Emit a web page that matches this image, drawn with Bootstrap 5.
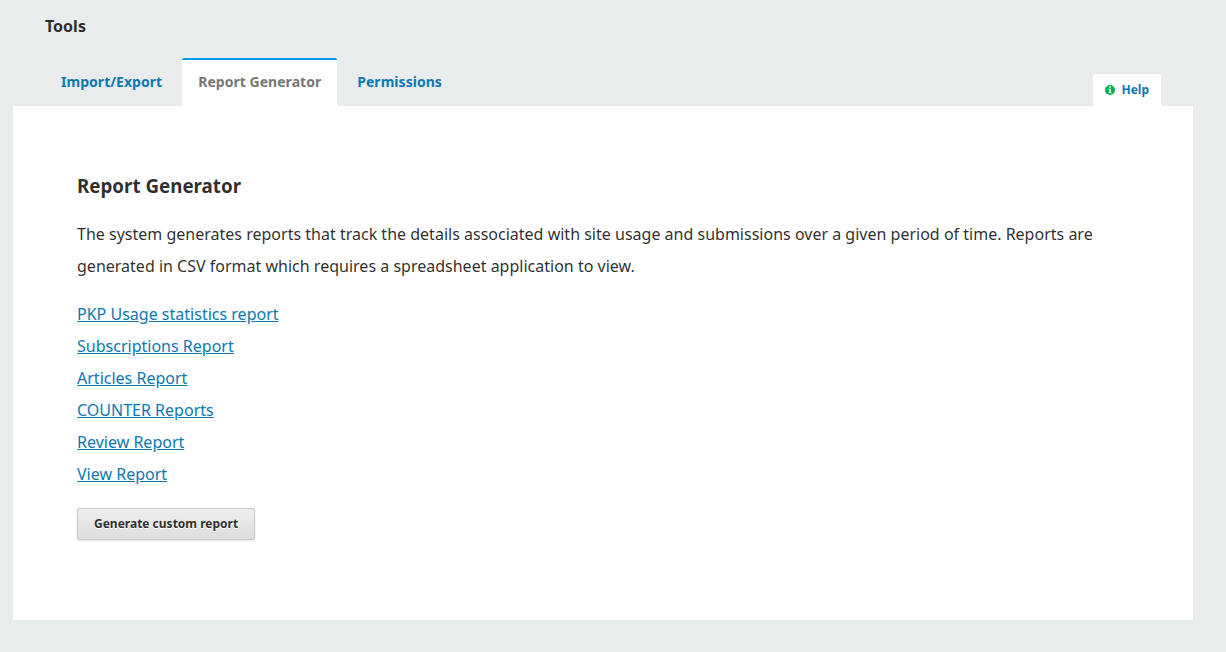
<!DOCTYPE html>
<html lang="en">
<head>
<meta charset="utf-8">
<title>Tools</title>
<link href="https://cdn.jsdelivr.net/npm/bootstrap@5.3.0/dist/css/bootstrap.min.css" rel="stylesheet">
<style>
body{background:#e8eced;font-family:"Noto Sans",sans-serif;font-size:14px;line-height:20px;color:rgba(0,0,0,.84);overflow:hidden}
.page{padding:0 33px 0 13px}
h1{font-size:16px;line-height:24px;font-weight:700;margin:0;padding:14px 32px 20px}
.tabs{height:48px;padding-left:32px;border:0}
.tabs .nav-link{padding:0 16px;line-height:48px;height:48px;font-weight:700;font-size:14px;letter-spacing:.035px;color:#0d78b0;border:0;border-radius:0}
.tabs .nav-link.active{background:#fff;color:#777;border-top:2px solid #009de5;border-radius:2px 2px 0 0;line-height:44px}
.help{background:#fff;color:#0d78b0;font-size:12px;font-weight:700;height:32px;padding:0 12px;margin-right:32px;border-radius:2px 2px 0 0;text-decoration:none}
.help svg{margin-right:6px}
.panel{background:#fff;height:514px;padding:64px}
h2{font-size:18.75px;line-height:31px;font-weight:700;margin:0 0 17px}
.panel p,.reports{font-size:16px;line-height:32px;letter-spacing:.007px;margin:0 0 16px}
.reports a{color:#0d78b0}
.custom{display:block;margin-top:18px;font-size:12px;line-height:30px;font-weight:700;padding:0 16px;border:1px solid #c8c8c8;border-radius:2px;background:linear-gradient(#eee,#ddd);color:rgba(0,0,0,.84);text-shadow:0 1px 0 #fff;box-shadow:0 1px 2px rgba(0,0,0,.12)}
</style>
</head>
<body>
<main class="page">
<h1>Tools</h1>
<div class="d-flex justify-content-between align-items-end">
<ul class="nav nav-tabs tabs">
<li class="nav-item"><a class="nav-link" href="#">Import/Export</a></li>
<li class="nav-item mx-1"><a class="nav-link active" href="#">Report Generator</a></li>
<li class="nav-item"><a class="nav-link" href="#">Permissions</a></li>
</ul>
<a class="help d-flex align-items-center" href="#"><svg width="10" height="10" viewBox="0 0 10 10"><circle cx="5" cy="5" r="5" fill="#00b24e"/><path d="M4.2 1.3h1.6v1.4H4.2zM3.4 3.7h2.4v3.5h.8v1H3.4v-1h.8V4.6h-.8z" fill="#fff"/></svg>Help</a>
</div>
<section class="panel">
<h2>Report Generator</h2>
<p>The system generates reports that track the details associated with site usage and submissions over a given period of time. Reports are generated in CSV format which requires a spreadsheet application to view.</p>
<ul class="list-unstyled reports">
<li><a href="#">PKP Usage statistics report</a></li>
<li><a href="#">Subscriptions Report</a></li>
<li><a href="#">Articles Report</a></li>
<li><a href="#">COUNTER Reports</a></li>
<li><a href="#">Review Report</a></li>
<li><a href="#">View Report</a></li>
</ul>
<button class="btn custom" type="button">Generate custom report</button>
</section>
</main>
<script src="https://cdn.jsdelivr.net/npm/bootstrap@5.3.0/dist/js/bootstrap.bundle.min.js"></script>
</body>
</html>
